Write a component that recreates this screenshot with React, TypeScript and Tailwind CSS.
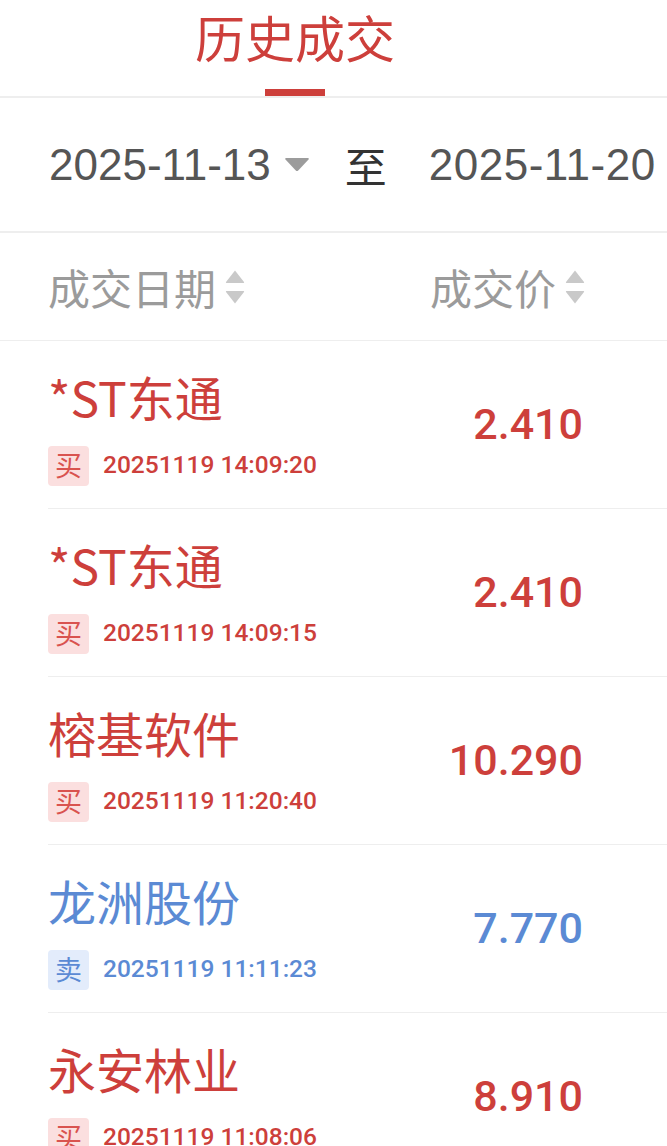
import React from "react";

const RED = "text-[#cd3f3b]";

type Row = { name: string; side: "买" | "卖"; time: string; price: string };

const rows: Row[] = [
  { name: "*ST东通", side: "买", time: "20251119 14:09:20", price: "2.410" },
  { name: "*ST东通", side: "买", time: "20251119 14:09:15", price: "2.410" },
  { name: "榕基软件", side: "买", time: "20251119 11:20:40", price: "10.290" },
  { name: "龙洲股份", side: "卖", time: "20251119 11:11:23", price: "7.770" },
  { name: "永安林业", side: "买", time: "20251119 11:08:06", price: "8.910" },
];

const CJK = "font-['Noto_Sans_CJK_SC','Noto_Sans',sans-serif]";
const NUM = "font-['Roboto','Noto_Sans_CJK_SC',sans-serif]";

function SortIcon() {
  return (
    <svg width="22" height="36" viewBox="0 0 22 36" className="ml-[8px]">
      <path d="M11 1.5 L20 13 Q20.5 14 19.5 14 L2.5 14 Q1.5 14 2 13 Z" fill="#c9c9c9" />
      <path d="M11 34.5 L20 23 Q20.5 22 19.5 22 L2.5 22 Q1.5 22 2 23 Z" fill="#c9c9c9" />
    </svg>
  );
}

function Caret() {
  return (
    <svg width="26" height="15" viewBox="0 0 26 15" className="ml-[13px]">
      <path d="M2 1 L24 1 Q25.5 1 24.5 2.5 L14.2 13.5 Q13 14.6 11.8 13.5 L1.5 2.5 Q0.5 1 2 1 Z" fill="#9c9c9c" />
    </svg>
  );
}

export default function App() {
  return (
    <div className={`w-[667px] h-[1146px] overflow-hidden bg-white ${CJK}`}>
      {/* Title tab */}
      <div className="h-[96px] w-[590px] flex flex-col items-center">
        <div className={`h-[72px] leading-[72px] text-[50px] ${RED}`}>历史成交</div>
        <div className="mt-[17px] h-[7px] w-[60px] bg-[#cd3f3b]" />
      </div>
      <div className="h-[2px] bg-[#eeeeee]" />

      {/* Date range */}
      <div className="h-[133px] flex items-center pl-[49px] whitespace-nowrap overflow-hidden">
        <span className="text-[44px] text-[#555555] font-['Liberation_Sans',sans-serif]">2025-11-13</span>
        <Caret />
        <span className="ml-[35px] text-[42px] text-[#333333]">至</span>
        <span className="ml-[42px] text-[44px] text-[#555555] font-['Liberation_Sans',sans-serif] tracking-[0.5px]">2025-11-20</span>
      </div>
      <div className="h-[2px] bg-[#eeeeee]" />

      {/* Header */}
      <div className="h-[107px] flex items-center pl-[48px]">
        <div className="w-[382px] flex items-center">
          <span className="text-[42px] text-[#9b9b9b] leading-none">成交日期</span>
          <SortIcon />
        </div>
        <div className="flex items-center">
          <span className="text-[42px] text-[#9b9b9b] leading-none">成交价</span>
          <SortIcon />
        </div>
      </div>
      <div className="h-px bg-[#eeeeee]" />

      {/* Rows */}
      <div className="pl-[48px]">
        {rows.map((r, i) => {
          const buy = r.side === "买";
          const color = buy ? "text-[#cd3f3b]" : "text-[#5b8ad4]";
          return (
            <div key={i} className="h-[168px] flex items-center justify-between pr-[84px] border-b border-[#eeeeee]">
              <div className="flex flex-col pt-[27px] pb-[23px]">
                <div className={`h-[56px] leading-[56px] text-[48px] ${color} whitespace-nowrap`}>{r.name}</div>
                <div className="mt-[22px] flex items-center">
                  <div
                    className={`w-[41px] h-[40px] rounded-[4px] flex items-center justify-center text-[27px] ${
                      buy ? "bg-[#fbdfdf] text-[#d9534f]" : "bg-[#e3ecfb] text-[#5b8ad4]"
                    }`}
                  >
                    {r.side}
                  </div>
                  <span className={`ml-[14px] text-[24.5px] ${NUM} font-medium ${color} whitespace-nowrap`}>{r.time}</span>
                </div>
              </div>
              <div className={`${NUM} font-medium text-[43px] ${color} leading-none`}>{r.price}</div>
            </div>
          );
        })}
      </div>
    </div>
  );
}
